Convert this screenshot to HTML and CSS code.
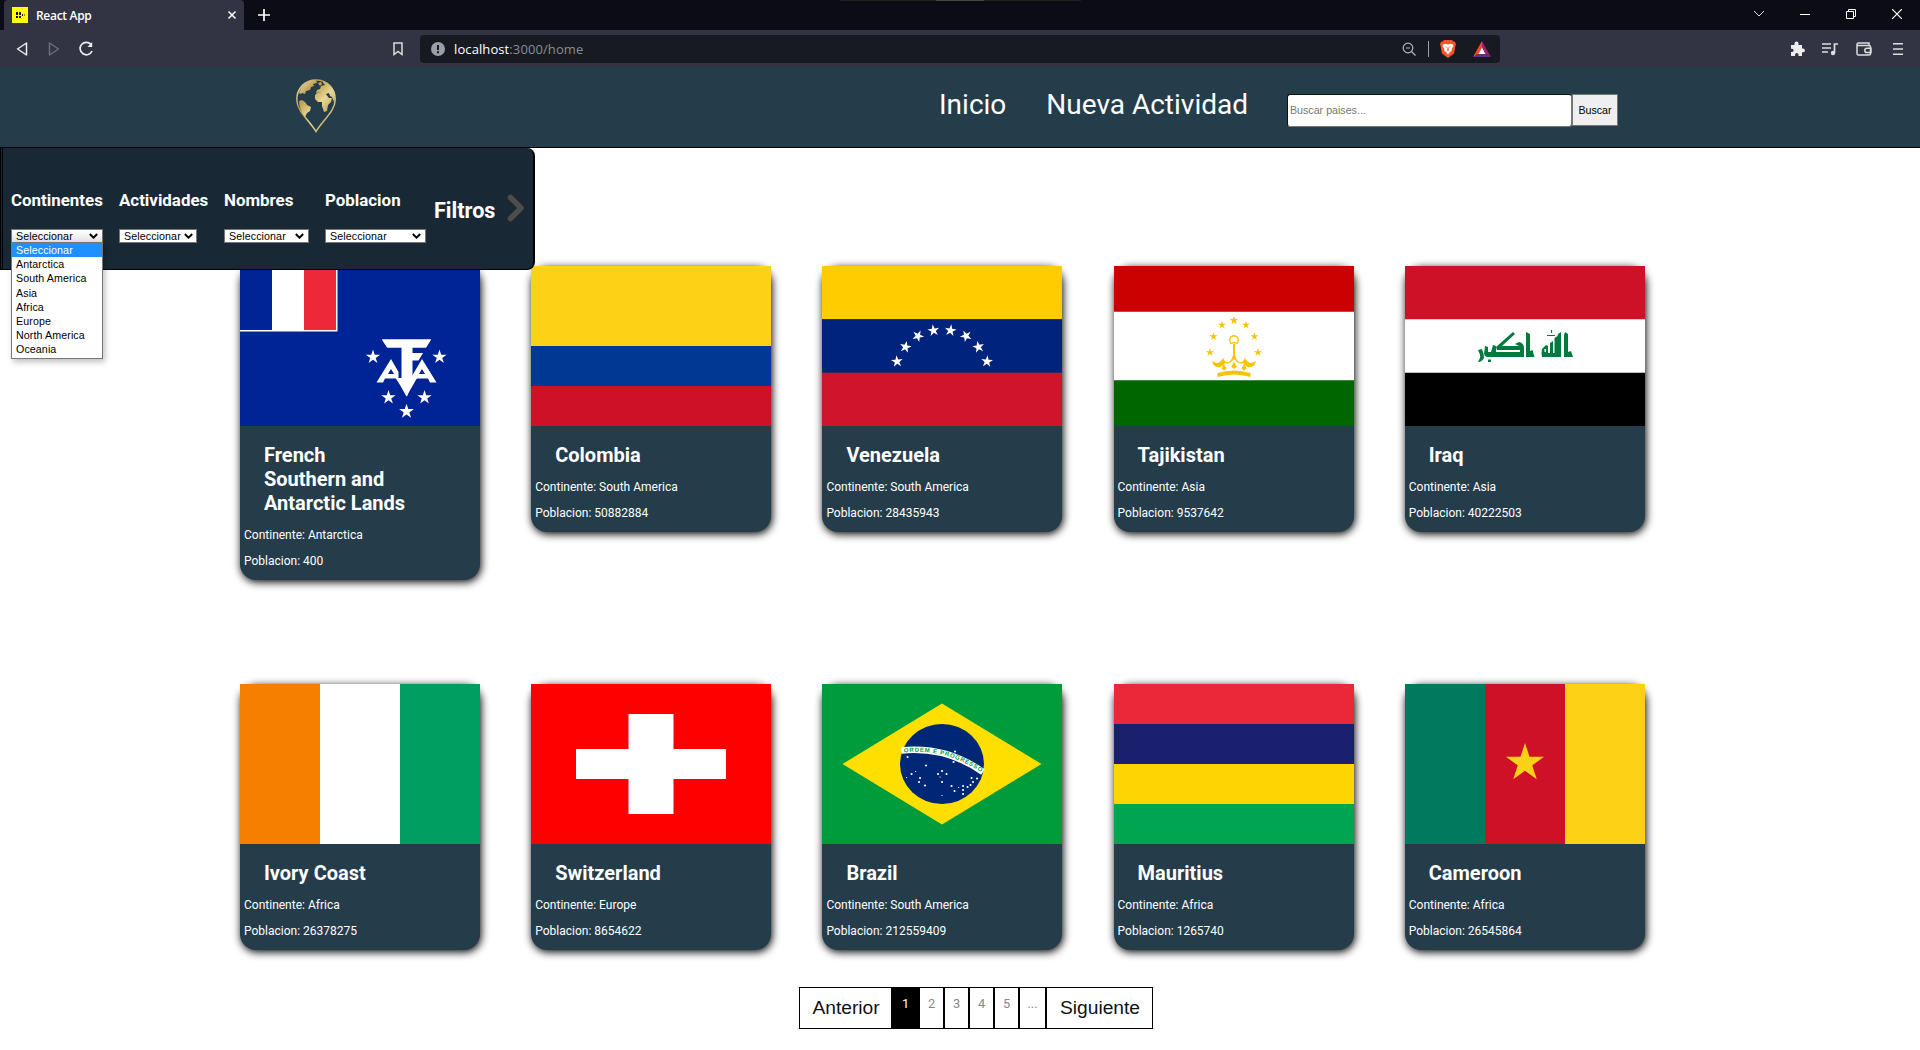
FILE: index.html
```html
<!DOCTYPE html>
<html lang="es">
<head>
<meta charset="utf-8">
<title>React App</title>
<link rel="stylesheet" href="styles.css">
</head>
<body>
<svg width="0" height="0" class="defs" aria-hidden="true">
  <defs>
    <path id="star" d="M0-10 2.25-3.09H9.51L3.63 1.18 5.88 8.09 0 3.82-5.88 8.09-3.63 1.18-9.51-3.09H-2.25Z"/>
    <linearGradient id="gold" x1="0" y1="0" x2="1" y2="1"><stop offset="0" stop-color="#f4e8b8"/><stop offset=".3" stop-color="#b89a48"/><stop offset=".6" stop-color="#ead796"/><stop offset="1" stop-color="#a88a3a"/></linearGradient>
  </defs>
</svg>

<div class="tabs">
  <div class="top-strip"><i></i></div>
  <div class="tab">
    <svg class="favicon" width="16" height="16" viewBox="0 0 16 16"><path fill="#ff0" d="M0 0h16v16H0z"/><path fill="#111" d="M4 5h2v3H4zM7 5h2v3H7zM4 9h2v2H4zM7 9h2v2H7zM10 7h1v2h-1zM12 7.500h1v1h-1z"/></svg>
    <span class="tab-title">React App</span>
    <svg width="10" height="10" viewBox="0 0 10 10" stroke="#fff" stroke-width="1.5"><path d="M1.500 1.500l7 7m0-7l-7 7"/></svg>
  </div>
  <svg class="plus" width="12" height="12" viewBox="0 0 12 12" stroke="#fff" stroke-width="1.700"><path d="M6 0v12M0 6h12"/></svg>
  <div class="window-controls">
    <svg width="10" height="10" viewBox="0 0 10 10" fill="none" stroke="#ddd"><path d="M0 2l5 5 5-5"/></svg>
    <svg width="10" height="10" viewBox="0 0 10 10" fill="none" stroke="#fff"><path d="M0 5.500h10"/></svg>
    <svg width="10" height="10" viewBox="0 0 10 10" fill="none" stroke="#fff"><path d="M.5 2.500h7v7h-7zM2.500 2.500v-2h7v7h-2"/></svg>
    <svg width="10" height="10" viewBox="0 0 10 10" fill="none" stroke="#fff" stroke-width="1.200"><path d="M0 0l10 10M10 0L0 10"/></svg>
  </div>
</div>

<div class="toolbar">
  <div class="nav-icons">
    <svg width="12" height="16" viewBox="0 0 12 16" fill="none" stroke="#eee" stroke-width="1.500"><path d="M10.500 2v12L1.500 8z" stroke-linejoin="round"/></svg>
    <svg width="12" height="16" viewBox="0 0 12 16" fill="none" stroke="#6b6d79" stroke-width="1.500"><path d="M1.500 2v12l9-6z" stroke-linejoin="round"/></svg>
    <svg class="reload" width="16" height="16" viewBox="0 0 16 16" fill="none" stroke="#eee" stroke-width="1.700"><path d="M13 3.500A6.200 6.200 0 1 0 14 10"/><path d="M14.200 1v5H9.500z" fill="#eee" stroke="none"/></svg>
  </div>
  <svg class="bookmark" width="10" height="14" viewBox="0 0 10 14" fill="none" stroke="#ddd" stroke-width="1.500"><path d="M1 1h8v11.500L5 9.500l-4 3z"/></svg>
  <div class="address">
    <svg class="info" width="14" height="14" viewBox="0 0 14 14"><circle cx="7" cy="7" r="7" fill="#9b9da8"/><path d="M6 3h2v5H6zM6 9.300h2v2H6z" fill="#181a21"/></svg>
    <span class="url">localhost<span>:3000/home</span></span>
    <svg class="lens" width="14" height="14" viewBox="0 0 14 14" fill="none" stroke="#b5b6bd" stroke-width="1.200"><circle cx="6" cy="6" r="4.800"/><path d="M9.500 9.500l4 4M4 6h4"/></svg>
    <i class="divider"></i>
    <svg width="16" height="18" viewBox="0 0 16 18"><path d="M4 0h8l1.500 1.700 1.300-.1L16 4l-.6 2L14 13.500 8 18l-6-4.500L.6 6 0 4l1.200-2.400 1.300.1z" fill="#fb542b"/><path d="M3 4.500l2.500-.7L8 4.500l2.500-.7 2.500.7.5 1.500-2 3 .3 1.500L10 12l-2 2.500L6 12l-1.800-1.500L4.500 9l-2-3z" fill="#fff"/><path d="M4.500 6.300l2.300.6-.5.800zM11.500 6.300l-2.300.6.5.800zM7.500 7h1v2.300l.9 1-1.400.7-1.400-.7.900-1z" fill="#fb542b"/></svg>
    <svg class="bat" width="18" height="16" viewBox="0 0 18 16"><path d="M9 0L0 16l5.500-3L9 6.500z" fill="#ff4724"/><path d="M9 0l9 16-5.500-3L9 6.500z" fill="#9e1f63"/><path d="M0 16h18l-5.500-3h-7z" fill="#662d91"/><path d="M9 6.500L12.500 13h-7z" fill="#fff"/></svg>
  </div>
  <div class="tool-icons">
    <svg width="15" height="15" viewBox="0 0 15 15"><path fill="#eee" d="M1 4h3.500V2.500a2 2 0 0 1 4 0V4H12v3.500h1a1.900 1.900 0 0 1 0 3.800h-1V15H8.500v-1.200a1.700 1.700 0 0 0-3.400 0V15H1v-4h1a1.600 1.600 0 0 0 0-3.300H1z"/></svg>
    <svg width="16" height="14" viewBox="0 0 16 14" fill="none" stroke="#ddd" stroke-width="1.700"><path d="M0 2h9M0 6h9M0 10h6M12.500 11V2H16"/><circle cx="11" cy="11" r="2.200" fill="#ddd" stroke="none"/></svg>
    <svg width="16" height="14" viewBox="0 0 16 14" fill="none" stroke="#ddd" stroke-width="1.500"><path d="M13 3.500V1H2.500Q1 1 1 2.500v9Q1 13 2.500 13H13q1.500 0 1.500-1.500V5Q14.500 3.500 13 3.500H1M15 6.200h-4a2.200 2.200 0 0 0 0 4.400h4z"/></svg>
    <svg width="10" height="14" viewBox="0 0 10 14" stroke="#ddd" stroke-width="1.500"><path d="M0 1.700h10M0 7h10M0 12.300h10"/></svg>
  </div>
</div>

<header class="header">
  <svg class="logo" width="42" height="54" viewBox="0 0 42 54"><path d="M21 1C10 1 1.800 9.500 1.800 20.500 1.800 32 13 40 21 52.500 29 40 40.200 32 40.200 20.500 40.200 9.500 32 1 21 1z" fill="none" stroke="url(#gold)" stroke-width="1.500"/><path fill="url(#gold)" d="M4 14C6 8 10 4 15 2l6-1 1 3-4 1 1 2-3 1-1 3-4 1-1 3-3-1-1 1zM4 22l3-1 3 2 2 3 4 2-1 4-3 2-2 4C6 33 4 27 4 22zM23 4l3-1 1 2-2 2zM28 2c6 2 11 8 12 17l-1 4-2-5-2-1-1-3-3 1-2-1-4-1-4 1 1-3 3-1 1-3 4-1-2-2zM22 14l4-1 4 1 4 5 3 0-1 4-3 3-1 6-3 1-2-6 0-4-4 0-3-3 0-4z"/></svg>
  <nav class="menu"><a>Inicio</a><a>Nueva Actividad</a></nav>
  <form class="search"><input type="text" placeholder="Buscar paises..."><button type="button">Buscar</button></form>
</header>

<main class="main">
  <aside class="filters">
    <div class="filter f1"><h4>Continentes</h4>
      <div class="select open">Seleccionar<svg width="9" height="6" viewBox="0 0 9 6"><path d="M.8 1l3.700 3.700L8.200 1" fill="none" stroke="#000" stroke-width="1.900"/></svg>
        <ul class="options"><li class="selected">Seleccionar</li><li>Antarctica</li><li>South America</li><li>Asia</li><li>Africa</li><li>Europe</li><li>North America</li><li>Oceania</li></ul>
      </div></div>
    <div class="filter f2"><h4>Actividades</h4><div class="select">Seleccionar<svg width="9" height="6" viewBox="0 0 9 6"><path d="M.8 1l3.700 3.700L8.200 1" fill="none" stroke="#000" stroke-width="1.900"/></svg></div></div>
    <div class="filter f3"><h4>Nombres</h4><div class="select">Seleccionar<svg width="9" height="6" viewBox="0 0 9 6"><path d="M.8 1l3.700 3.700L8.200 1" fill="none" stroke="#000" stroke-width="1.900"/></svg></div></div>
    <div class="filter f4"><h4>Poblacion</h4><div class="select">Seleccionar<svg width="9" height="6" viewBox="0 0 9 6"><path d="M.8 1l3.700 3.700L8.200 1" fill="none" stroke="#000" stroke-width="1.900"/></svg></div></div>
    <h3>Filtros</h3>
    <svg class="arrow" width="18" height="28" viewBox="0 0 18 28"><path d="M3.500 3.500L14 14 3.500 24.500" fill="none" stroke="#4d4d4d" stroke-width="5.500" stroke-linecap="round" stroke-linejoin="round"/></svg>
  </aside>

  <section class="cards">
    <article class="card">
      <svg class="flag" viewBox="0 0 240 160"><path fill="#002395" d="M0 0h240v160H0z"/><path fill="#fff" d="M0 0h97.500v65.500H0z"/><path fill="#002395" d="M0 0h32v64H0z"/><path fill="#ed2939" d="M64 0h32v64H64z"/>
        <g fill="#fff"><path d="M142 73.500h49l-5 8h-13.500v5.500h10l-4.500 7h-5.500v20.500l-5.500 16-5.500-16V81.500h-14z"/><path d="M142 73.500h49l-5 8h-39z"/><path d="M171 87h12l-4.500 7.500H171z"/><path fill-rule="evenodd" d="M136.500 116.500L151 93l7.500 13v10.500l-2.500-4h-11l-2 4zM148 108h6l-3-5zM196.500 116.500L182 93l-10 17v6.500l5-4h11l2 4zM179 108h6l-3-5z"/><path d="M156 112h21l-10.500 18.500z"/>
        <use href="#star" transform="translate(133 91) scale(.75)"/><use href="#star" transform="translate(199.500 91) scale(.75)"/><use href="#star" transform="translate(148.500 131.500) scale(.75)"/><use href="#star" transform="translate(184.500 131.500) scale(.75)"/><use href="#star" transform="translate(166.500 145.500) scale(.78)"/></g></svg>
      <h2>French<br>Southern and<br>Antarctic Lands</h2><p>Continente: Antarctica</p><p>Poblacion: 400</p>
    </article>
    <article class="card">
      <svg class="flag" viewBox="0 0 240 160"><path fill="#fcd116" d="M0 0h240v80H0z"/><path fill="#003893" d="M0 80h240v40H0z"/><path fill="#ce1126" d="M0 120h240v40H0z"/></svg>
      <h2>Colombia</h2><p>Continente: South America</p><p>Poblacion: 50882884</p>
    </article>
    <article class="card">
      <svg class="flag" viewBox="0 0 240 160"><path fill="#fc0" d="M0 0h240v53.300H0z"/><path fill="#00247d" d="M0 53.300h240v53.400H0z"/><path fill="#cf142b" d="M0 106.700h240V160H0z"/>
        <g fill="#fff"><use href="#star" transform="translate(75 95.500) rotate(-5) scale(.62)"/><use href="#star" transform="translate(83.500 81) rotate(12) scale(.62)"/><use href="#star" transform="translate(96 70) rotate(25) scale(.62)"/><use href="#star" transform="translate(111.500 64.500) rotate(-8) scale(.62)"/><use href="#star" transform="translate(128.500 64.500) rotate(8) scale(.62)"/><use href="#star" transform="translate(144 70) rotate(-25) scale(.62)"/><use href="#star" transform="translate(156.500 81) rotate(-12) scale(.62)"/><use href="#star" transform="translate(165 95.500) rotate(5) scale(.62)"/></g></svg>
      <h2>Venezuela</h2><p>Continente: South America</p><p>Poblacion: 28435943</p>
    </article>
    <article class="card">
      <svg class="flag" viewBox="0 0 240 160"><path fill="#fff" d="M0 0h240v160H0z"/><path fill="#c00" d="M0 0h240v45.700H0z"/><path fill="#060" d="M0 114.300h240V160H0z"/>
        <g fill="#f8c300"><use href="#star" transform="translate(96 86.500) scale(.42)"/><use href="#star" transform="translate(99.500 70.500) scale(.42)"/><use href="#star" transform="translate(108 59) scale(.42)"/><use href="#star" transform="translate(120 54.500) scale(.45)"/><use href="#star" transform="translate(132 59) scale(.42)"/><use href="#star" transform="translate(140.500 70.500) scale(.42)"/><use href="#star" transform="translate(144 86.500) scale(.42)"/>
        <path d="M119 78h2v11q1 5 4 7 4 1 6-4 2 4 5 5 3 0 6-2-1 5-5 6-5 1-8-4-4 2-9-4-5 6-9 4-3 5-8 4-4-1-5-6 3 2 6 2 3-1 5-5 2 5 6 4 3-2 4-7z"/><path d="M103.500 107q16.500-5 33 0v4q-16.500-5-33 0z"/><path d="M110 98l2.500 4.500-2.500 2-2.500-2zM120 96l2.800 4.500-2.800 2.500-2.800-2.500zM130 98l2.500 4.500-2.500 2-2.500-2z"/></g><path d="M117 77.500Q114.500 74 117 71q3-2.500 6 0 2.500 3 0 6.500l-3-1z" fill="none" stroke="#f8c300" stroke-width="1.300"/></svg>
      <h2>Tajikistan</h2><p>Continente: Asia</p><p>Poblacion: 9537642</p>
    </article>
    <article class="card">
      <svg class="flag" viewBox="0 0 240 160"><path fill="#fff" d="M0 0h240v160H0z"/><path fill="#ce1126" d="M0 0h240v53.300H0z"/><path d="M0 106.700h240V160H0z"/>
        <g fill="#007a3d"><path d="M160 66l3 2v18l3-1 2 6h-9V69zM153 68l3-2v25h-19q-1-4 0-8l4-4 2 1v7h2V77l3-2v12h1.500V72l3-2zM139.500 83v3h1.500v-3z" fill-rule="evenodd"/><path d="M142 69.500h8M146.500 64v3" stroke="#007a3d" stroke-width="1.200"/><path d="M121 66l4 2v17l2.500-1 2 7H121zM108 66l2 2-13 12h17l-4-2 4-2q5 1 5 6v9H82q-2 0-3-3l1-8 3 1v5h3l2-7 3 1v6h24v-2H92l-1-3z"/><path d="M73 84l4-1q2 5 2 9-2 4-6 4l2-4q1-2-2-8zM83 93.500h3v2.500h-3z"/></g></svg>
      <h2>Iraq</h2><p>Continente: Asia</p><p>Poblacion: 40222503</p>
    </article>
    <article class="card">
      <svg class="flag" viewBox="0 0 240 160"><path fill="#fff" d="M0 0h240v160H0z"/><path fill="#f77f00" d="M0 0h80v160H0z"/><path fill="#009e60" d="M160 0h80v160h-80z"/></svg>
      <h2>Ivory Coast</h2><p>Continente: Africa</p><p>Poblacion: 26378275</p>
    </article>
    <article class="card">
      <svg class="flag" viewBox="0 0 240 160"><path fill="red" d="M0 0h240v160H0z"/><path fill="#fff" d="M97.500 30h45v35H195v30h-52.500v35h-45V95H45V65h52.500z"/></svg>
      <h2>Switzerland</h2><p>Continente: Europe</p><p>Poblacion: 8654622</p>
    </article>
    <article class="card">
      <svg class="flag" viewBox="0 0 240 160"><path fill="#009c3b" d="M0 0h240v160H0z"/><path fill="#ffdf00" d="M120 19.500L219.500 80 120 140.500 20.500 80z"/><ellipse cx="120" cy="80" rx="42" ry="40" fill="#002776"/>
        <path d="M79.500 66.500Q124 62 161 88" fill="none" stroke="#fff" stroke-width="6.500"/><path id="motto" d="M82 68.500Q124 64 160 89" fill="none"/><text class="motto"><textPath href="#motto" textLength="81">ORDEM E PROGRESSO</textPath></text>
        <path fill="none" stroke="#fff" stroke-width="2" stroke-linecap="round" d="M85.500 73h.1M104 81.500h.1M89.500 90h.1M98 94h.1M97 98h.1M103 101.500h.1M120 87h.1M120 98h.1M116 90h.1M124.500 90h.1M129.500 102h.1M132.500 107h.1M141 102h.1M141 106h.1M141 110h.1M145.500 103h.1M148.500 101h.1M151 98h.1M149.500 94h.1M155 94.500h.1M131.500 78h.1M133 67.500h.1"/><path fill="none" stroke="#fff" stroke-width="1.200" stroke-linecap="round" d="M84.500 93.500h.1M93.500 87.500h.1M118 93h.1M120 111.500h.1M136.500 103.500h.1"/></svg>
      <h2>Brazil</h2><p>Continente: South America</p><p>Poblacion: 212559409</p>
    </article>
    <article class="card">
      <svg class="flag" viewBox="0 0 240 160"><path fill="#ea2839" d="M0 0h240v40H0z"/><path fill="#1a206d" d="M0 40h240v40H0z"/><path fill="#ffd500" d="M0 80h240v40H0z"/><path fill="#00a551" d="M0 120h240v40H0z"/></svg>
      <h2>Mauritius</h2><p>Continente: Africa</p><p>Poblacion: 1265740</p>
    </article>
    <article class="card">
      <svg class="flag" viewBox="0 0 240 160"><path fill="#007a5e" d="M0 0h80v160H0z"/><path fill="#ce1126" d="M80 0h80v160H80z"/><path fill="#fcd116" d="M160 0h80v160h-80z"/><use href="#star" fill="#fcd116" transform="translate(120 79) scale(2)"/></svg>
      <h2>Cameroon</h2><p>Continente: Africa</p><p>Poblacion: 26545864</p>
    </article>
  </section>

  <div class="pagination"><span class="step prev">Anterior</span><span class="page active">1</span><span class="page">2</span><span class="page">3</span><span class="page">4</span><span class="page">5</span><span class="page dots">...</span><span class="step next">Siguiente</span></div>
</main>
</body>
</html>
```
FILE: styles.css
```css
* { box-sizing: border-box; }
body { margin: 0; width: 1920px; height: 1050px; overflow: hidden; background: #fff; font-family: Roboto, sans-serif; display: flex; flex-direction: column; }
h2, h3, h4, p, ul { margin: 0; padding: 0; }
svg { display: block; flex: none; }
.defs { position: absolute; }

/* Browser chrome */
.tabs { height: 30px; flex: none; background: #0b0c15; display: flex; align-items: flex-start; padding-left: 4px; position: relative; }
.top-strip { position: absolute; left: 840px; top: 0; width: 241px; height: 1px; background: #1e1f1d; }
.top-strip i { display: block; margin-left: 96px; width: 48px; height: 1px; background: #484843; }
.tab { width: 240px; height: 30px; padding: 0 7px 0 8px; background: #323443; border-radius: 4px 4px 0 0; display: flex; align-items: center; }
.tab-title { flex: 1; margin-left: 8px; color: #fff; font: 600 12px "Open Sans", sans-serif; letter-spacing: -.3px; }
.plus { margin: 9px 0 0 14px; }
.window-controls { margin: 9px 18px 0 auto; display: flex; gap: 36px; }
.toolbar { height: 37px; flex: none; background: #323443; display: flex; align-items: center; }
.nav-icons { display: flex; gap: 20px; margin-left: 16px; width: 377px; align-items: center; }
.reload { margin-left: -2px; }
.bookmark { margin-right: 17px; }
.address { width: 1080px; height: 28px; background: #181a21; border-radius: 4px; display: flex; align-items: center; padding: 0 9px 0 11px; }
.url { flex: 1; margin-left: 9px; color: #fff; font: 13px "Open Sans", sans-serif; letter-spacing: .1px; }
.url span { color: #8b8c92; }
.divider { width: 1px; height: 16px; background: #a0a1a7; margin: 0 11px 0 12px; }
.bat { margin-left: 17px; }
.tool-icons { display: flex; align-items: center; margin: 0 17px 0 auto; gap: 18px; }
.tool-icons svg:first-child { margin-right: -1px; }
.tool-icons svg:last-child { margin-left: 3px; }

/* Site header */
.header { height: 81px; flex: none; background: #253c4b; border-bottom: 1px solid #000; display: flex; }
.logo { margin: 12px 0 0 295px; }
.menu { margin: 21px 0 0 602px; width: 309px; display: flex; justify-content: space-between; font-size: 28px; line-height: 34px; color: #fff; }
.search { display: flex; margin: 27px 0 0 39px; height: 33px; align-items: flex-start; }
.search input { width: 285px; height: 33px; padding: 0 2px 2px; border: 1px solid #767676; border-top-color: #111; border-left-color: #111; border-radius: 3px; background: #fff; font: 10.67px "Liberation Sans", Arial, sans-serif; }
.search button { width: 46px; height: 32px; padding: 0; border: 1px solid #767676; background: #efefef; font: 10.67px "Liberation Sans", Arial, sans-serif; color: #000; }

/* Filters */
.main { flex: 1; position: relative; }
.filters { position: absolute; z-index: 2; left: 0; top: 0; width: 535px; height: 122px; background: #182935; border: solid #000; border-width: 0 2px 1px 1px; border-radius: 0 8px 8px 0; box-shadow: inset 1px 0 #182935, inset 2px 0 #000; color: #fff; display: flex; padding: 42px 0 0 10px; }
.filter { display: flex; flex-direction: column; gap: 19px; align-items: flex-start; }
.f1 { width: 108px; } .f2 { width: 105px; } .f3 { width: 101px; } .f4 { width: 109px; }
.filter h4 { font-size: 16.900px; line-height: 20px; white-space: nowrap; }
.select { position: relative; width: 100%; height: 14px; border: 1px solid #767676; background: #fff; color: #000; font: 10.67px/12px "Liberation Sans", Arial, sans-serif; letter-spacing: .1px; display: flex; align-items: center; justify-content: space-between; padding: 0 4px 0 4px; }
.f1 .select { width: 92px; } .f2 .select { width: 78px; } .f3 .select { width: 85px; } .f4 .select { width: 101px; }
.f2 .select { padding-right: 3px; }
.select.open { background: linear-gradient(#fff, #e4e4e4); }
.options { position: absolute; left: -1px; top: 12px; width: 92px; height: 117px; border: 1px solid #767676; background: #fff; list-style: none; box-shadow: 2px 3px 6px rgba(0,0,0,.25); }
.options li { height: 14.200px; line-height: 14px; padding-left: 4px; }
.options .selected { background: #1e90ff; color: #fff; }
.filters h3 { font-size: 21.600px; line-height: 26px; margin-top: 8px; width: 73px; }
.arrow { margin-top: 4px; }

/* Country cards */
.cards { display: grid; grid-template-columns: repeat(5, 240px); column-gap: 51.200px; padding: 118px 0 0 240px; grid-template-rows: 418px 266px; align-items: start; }
.card { background: #253c4b; border-radius: 16px; box-shadow: 1px 2px 8px #000; color: #fff; padding-bottom: 12px; }
.flag { width: 240px; height: 160px; }
.card h2 { font-size: 20px; line-height: 24px; margin: 17px 24px 13px; }
.card p { font-size: 12px; line-height: 14px; margin: 0 4px 12px; }
.card p:last-child { margin-bottom: 0; }
.motto { font: bold 6px "Liberation Sans", sans-serif; fill: #009c3b; }

/* Pagination */
.pagination { display: flex; width: 354px; height: 42px; margin: 37px 0 0 799px; }
.pagination span { border: 1px solid #000; text-align: center; }
.step { font: 19.200px/40px "Liberation Sans", Arial, sans-serif; color: #111; }
.pagination .prev { width: 93px; padding-left: 1px; }
.pagination .next { flex: 1; padding-left: 1px; }
.page { width: 25px; font-size: 12.800px; line-height: 32px; color: #888; }
.pagination .active { width: 27px; background: #000; color: #fff; }
.pagination .dots { width: 27px; }
```
